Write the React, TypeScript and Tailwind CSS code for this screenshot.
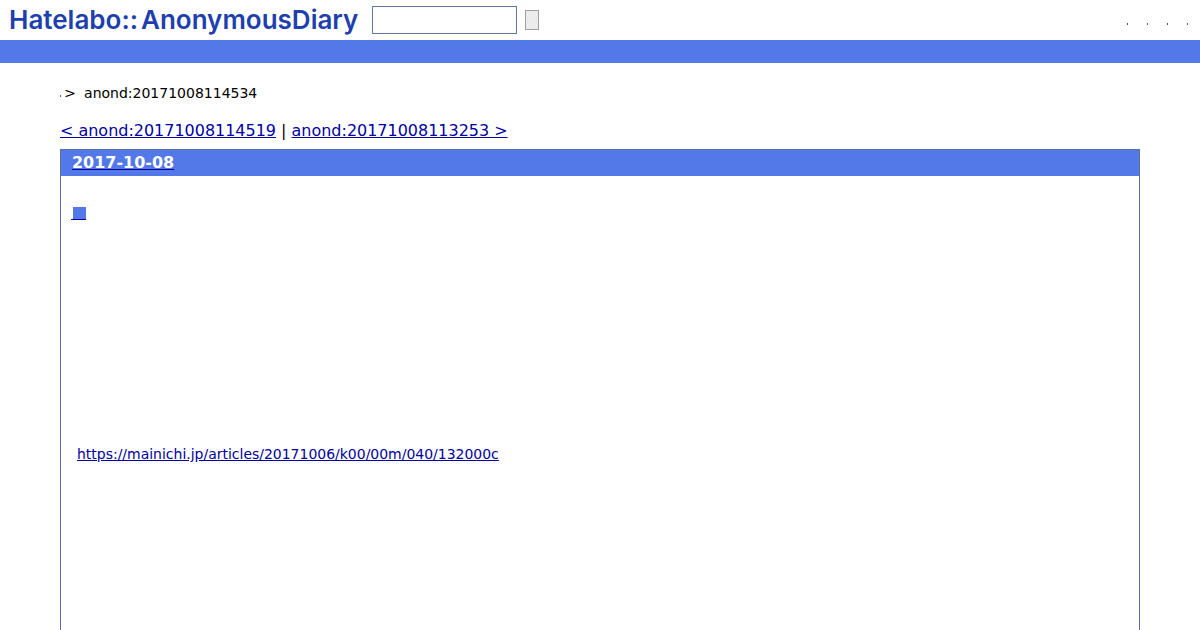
import React from "react";

const App: React.FC = () => {
  return (
    <div className="h-[630px] overflow-hidden bg-white font-['DejaVu_Sans',sans-serif] text-black">
      {/* Header */}
      <div className="flex h-10 items-center">
        <div className="ml-[9px] w-[349px] whitespace-nowrap font-['Inter',sans-serif] text-[26px] font-semibold leading-10 tracking-[0px] text-[#1e3fae]">
          Hatelabo::<span className="ml-[3px]">AnonymousDiary</span>
        </div>
        <input
          type="text"
          className="ml-[14px] h-[28px] w-[145px] border border-[#64789a] bg-white"
        />
        <button type="button" className="ml-2 h-5 w-[14px] border border-[#a0a0a0] bg-[#ececec]" />
        <div className="ml-auto mr-[12px] mt-[7px] flex gap-[19px]">
          <span className="h-[2px] w-px bg-[#555]" />
          <span className="h-[2px] w-px bg-[#555]" />
          <span className="h-[2px] w-px bg-[#555]" />
          <span className="h-[2px] w-px bg-[#555]" />
        </div>
      </div>
      <div className="h-[23px] bg-[#5279e7]" />

      <div className="mx-[60px]">
        {/* Breadcrumb */}
        <div className="mt-[21px] flex h-[18px] items-center text-[14px] leading-[18px]">
          <span className="mt-[6px] h-[2px] w-px bg-[#555]" />
          <span className="ml-[3px] text-[14.4px]">&gt;</span>
          <span className="ml-2">anond:20171008114534</span>
        </div>

        {/* Prev / next */}
        <div className="mt-[19px] text-[15.97px] leading-[19px]">
          <a href="#" className="text-[#0000a0] underline">
            &lt; anond:20171008114519
          </a>{" "}
          |{" "}
          <a href="#" className="text-[#0000a0] underline">
            anond:20171008113253 &gt;
          </a>
        </div>

        {/* Day */}
        <div className="mt-[9px] h-[600px] border border-[#5a6f9e]">
          <div className="h-[26px] bg-[#5279e7] pl-[11px] pt-px text-[15.97px] font-bold leading-[24px] text-white">
            <a href="#" className="underline decoration-[#0000a0]">
              2017-10-08
            </a>
          </div>
          <div className="mt-[27px] pl-[10px]">
            <a href="#" className="flex h-[17px] w-[15px] justify-end border-b border-[#0000a0]">
              <span className="mt-[4px] h-[12px] w-[13px] bg-[#5279e7]" />
            </a>
          </div>
          <div className="mt-[225px] pl-4 text-[13.97px] leading-[18px]">
            <a href="#" className="text-[#0000a0] underline">
              https://mainichi.jp/articles/20171006/k00/00m/040/132000c
            </a>
          </div>
        </div>
      </div>
    </div>
  );
};

export default App;
